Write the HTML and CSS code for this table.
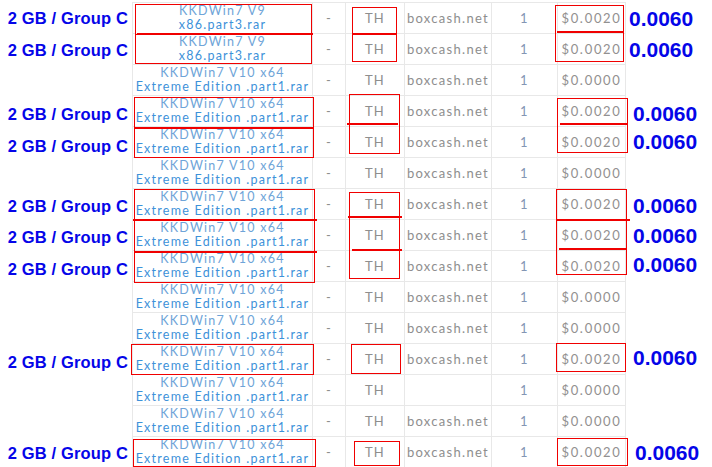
FILE: index.html
```html
<!DOCTYPE html>
<html>
<head>
<meta charset="utf-8">
<link rel="stylesheet" href="styles.css">
</head>
<body>
<div class="sheet">
  <div class="row">
    <div class="lbl dn1">2 GB / Group C</div>
    <div class="c fn"><span class="l1">KKDWin7 V9</span><span class="l2">x86.part3.rar</span></div>
    <div class="c">-</div><div class="c">TH</div><div class="c">boxcash.net</div><div class="c n">1</div><div class="c pr">$0.0020</div>
    <div class="val near dn1">0.0060</div>
  </div>
  <div class="row">
    <div class="lbl dn2">2 GB / Group C</div>
    <div class="c fn"><span class="l1">KKDWin7 V9</span><span class="l2">x86.part3.rar</span></div>
    <div class="c">-</div><div class="c">TH</div><div class="c">boxcash.net</div><div class="c n">1</div><div class="c pr">$0.0020</div>
    <div class="val near dn1">0.0060</div>
  </div>
  <div class="row">
    <div class="lbl"></div>
    <div class="c fn"><span class="l1">KKDWin7 V10 x64</span><span class="l2">Extreme Edition .part1.rar</span></div>
    <div class="c">-</div><div class="c">TH</div><div class="c">boxcash.net</div><div class="c n">1</div><div class="c pr">$0.0000</div>
    <div class="val"></div>
  </div>
  <div class="row">
    <div class="lbl dn4">2 GB / Group C</div>
    <div class="c fn"><span class="l1">KKDWin7 V10 x64</span><span class="l2">Extreme Edition .part1.rar</span></div>
    <div class="c">-</div><div class="c">TH</div><div class="c">boxcash.net</div><div class="c n">1</div><div class="c pr">$0.0020</div>
    <div class="val dn3">0.0060</div>
  </div>
  <div class="row">
    <div class="lbl dn5">2 GB / Group C</div>
    <div class="c fn"><span class="l1">KKDWin7 V10 x64</span><span class="l2">Extreme Edition .part1.rar</span></div>
    <div class="c">-</div><div class="c">TH</div><div class="c">boxcash.net</div><div class="c n">1</div><div class="c pr">$0.0020</div>
    <div class="val">0.0060</div>
  </div>
  <div class="row">
    <div class="lbl"></div>
    <div class="c fn"><span class="l1">KKDWin7 V10 x64</span><span class="l2">Extreme Edition .part1.rar</span></div>
    <div class="c">-</div><div class="c">TH</div><div class="c">boxcash.net</div><div class="c n">1</div><div class="c pr">$0.0000</div>
    <div class="val"></div>
  </div>
  <div class="row">
    <div class="lbl dn3">2 GB / Group C</div>
    <div class="c fn"><span class="l1">KKDWin7 V10 x64</span><span class="l2">Extreme Edition .part1.rar</span></div>
    <div class="c">-</div><div class="c">TH</div><div class="c">boxcash.net</div><div class="c n">1</div><div class="c pr">$0.0020</div>
    <div class="val dn2">0.0060</div>
  </div>
  <div class="row">
    <div class="lbl dn3">2 GB / Group C</div>
    <div class="c fn"><span class="l1">KKDWin7 V10 x64</span><span class="l2">Extreme Edition .part1.rar</span></div>
    <div class="c">-</div><div class="c">TH</div><div class="c">boxcash.net</div><div class="c n">1</div><div class="c pr">$0.0020</div>
    <div class="val dn1">0.0060</div>
  </div>
  <div class="row">
    <div class="lbl dn4">2 GB / Group C</div>
    <div class="c fn"><span class="l1">KKDWin7 V10 x64</span><span class="l2">Extreme Edition .part1.rar</span></div>
    <div class="c">-</div><div class="c">TH</div><div class="c">boxcash.net</div><div class="c n">1</div><div class="c pr">$0.0020</div>
    <div class="val up1">0.0060</div>
  </div>
  <div class="row">
    <div class="lbl"></div>
    <div class="c fn"><span class="l1">KKDWin7 V10 x64</span><span class="l2">Extreme Edition .part1.rar</span></div>
    <div class="c">-</div><div class="c">TH</div><div class="c">boxcash.net</div><div class="c n">1</div><div class="c pr">$0.0000</div>
    <div class="val"></div>
  </div>
  <div class="row">
    <div class="lbl"></div>
    <div class="c fn"><span class="l1">KKDWin7 V10 x64</span><span class="l2">Extreme Edition .part1.rar</span></div>
    <div class="c">-</div><div class="c">TH</div><div class="c">boxcash.net</div><div class="c n">1</div><div class="c pr">$0.0000</div>
    <div class="val"></div>
  </div>
  <div class="row">
    <div class="lbl dn4">2 GB / Group C</div>
    <div class="c fn"><span class="l1">KKDWin7 V10 x64</span><span class="l2">Extreme Edition .part1.rar</span></div>
    <div class="c">-</div><div class="c">TH</div><div class="c">boxcash.net</div><div class="c n">1</div><div class="c pr">$0.0020</div>
    <div class="val up1">0.0060</div>
  </div>
  <div class="row">
    <div class="lbl"></div>
    <div class="c fn"><span class="l1">KKDWin7 V10 x64</span><span class="l2">Extreme Edition .part1.rar</span></div>
    <div class="c">-</div><div class="c">TH</div><div class="c"></div><div class="c n">1</div><div class="c pr">$0.0000</div>
    <div class="val"></div>
  </div>
  <div class="row">
    <div class="lbl"></div>
    <div class="c fn"><span class="l1">KKDWin7 V10 x64</span><span class="l2">Extreme Edition .part1.rar</span></div>
    <div class="c">-</div><div class="c">TH</div><div class="c">boxcash.net</div><div class="c n">1</div><div class="c pr">$0.0000</div>
    <div class="val"></div>
  </div>
  <div class="row">
    <div class="lbl dn2">2 GB / Group C</div>
    <div class="c fn"><span class="l1">KKDWin7 V10 x64</span><span class="l2">Extreme Edition .part1.rar</span></div>
    <div class="c">-</div><div class="c">TH</div><div class="c">boxcash.net</div><div class="c n">1</div><div class="c pr">$0.0020</div>
    <div class="val far dn1">0.0060</div>
  </div>
</div>

<div class="marks">
  <div class="box" style="left:135px;top:4px;width:177px;height:31px"></div>
  <div class="bar" style="left:137px;top:33px;width:176px"></div>
  <div class="box" style="left:135px;top:34px;width:177px;height:30px"></div>
  <div class="box" style="left:352px;top:7px;width:45px;height:55px"></div>
  <div class="bar" style="left:352px;top:33px;width:45px"></div>
  <div class="box" style="left:555px;top:5px;width:69px;height:57px"></div>
  <div class="bar" style="left:557px;top:31px;width:66px"></div>

  <div class="box" style="left:134px;top:97px;width:180px;height:61px"></div>
  <div class="bar" style="left:135px;top:127px;width:179px"></div>
  <div class="box" style="left:349px;top:94px;width:51px;height:60px"></div>
  <div class="bar" style="left:347px;top:123px;width:51px"></div>
  <div class="box" style="left:557px;top:98px;width:71px;height:55px"></div>
  <div class="bar" style="left:560px;top:123px;width:68px"></div>

  <div class="box" style="left:134px;top:189px;width:181px;height:94px"></div>
  <div class="bar" style="left:133px;top:219px;width:184px"></div>
  <div class="bar" style="left:134px;top:251px;width:183px"></div>
  <div class="box" style="left:349px;top:192px;width:51px;height:87px"></div>
  <div class="bar" style="left:348px;top:216px;width:54px"></div>
  <div class="bar" style="left:352px;top:249px;width:50px"></div>
  <div class="box" style="left:556px;top:189px;width:71px;height:86px"></div>
  <div class="bar" style="left:556px;top:219px;width:74px"></div>
  <div class="bar" style="left:559px;top:248px;width:68px"></div>

  <div class="box" style="left:131px;top:344px;width:183px;height:31px"></div>
  <div class="box" style="left:351px;top:344px;width:50px;height:30px"></div>
  <div class="box" style="left:556px;top:343px;width:70px;height:29px"></div>

  <div class="box" style="left:133px;top:439px;width:183px;height:28px"></div>
  <div class="box" style="left:354px;top:441px;width:46px;height:25px"></div>
  <div class="box" style="left:557px;top:438px;width:71px;height:28px"></div>
</div>
</body>
</html>
```

FILE: styles.css
```css
html, body {
  margin: 0;
  padding: 0;
  background: #ffffff;
  overflow: hidden;
}

body {
  position: relative;
  width: 712px;
  height: 467px;
}

.sheet {
  padding-top: 2px;
}

.row {
  display: grid;
  grid-template-columns: 132px 180px 33px 59px 87px 66px 69px 1fr;
  height: 31px;
}

.c {
  border-top: 1px solid #e8e8e8;
  border-left: 1px solid #e8e8e8;
  display: flex;
  align-items: center;
  justify-content: center;
  font-family: Lato, "Liberation Sans", sans-serif;
  font-weight: 400;
  font-size: 13px;
  letter-spacing: 1.3px;
  color: #8e8e8e;
  white-space: nowrap;
}

.c.n {
  color: #8396b4;
}

.c.pr {
  border-right: 1px solid #e8e8e8;
  letter-spacing: 1.7px;
  color: #929090;
}

.fn {
  flex-direction: column;
  font-size: 12.5px;
  line-height: 14px;
  letter-spacing: 1.25px;
}

.fn .l1 {
  color: #6ea4d8;
}

.fn .l2 {
  color: #3d91d9;
}

.lbl {
  display: flex;
  align-items: center;
  justify-content: flex-end;
  padding-right: 4px;
  font-family: "Liberation Sans", Arial, sans-serif;
  font-weight: bold;
  font-size: 16.5px;
  letter-spacing: 0.15px;
  color: #0505e8;
  white-space: nowrap;
}

.val {
  display: flex;
  align-items: center;
  padding-left: 7px;
  font-family: "Liberation Sans", Arial, sans-serif;
  font-weight: bold;
  font-size: 21px;
  color: #0505e8;
}

.val.near { padding-left: 3px; }
.val.far { padding-left: 9px; }

.up1 { padding-bottom: 2px; }
.dn1 { padding-top: 2px; }
.dn2 { padding-top: 4px; }
.dn3 { padding-top: 6px; }
.dn4 { padding-top: 8px; }
.dn5 { padding-top: 10px; }

.marks {
  position: absolute;
  left: 0;
  top: 0;
  width: 712px;
  height: 467px;
  pointer-events: none;
}

.box {
  position: absolute;
  box-sizing: border-box;
  border: 1px solid #f00000;
}

.bar {
  position: absolute;
  height: 2px;
  background: #f00000;
}
```
